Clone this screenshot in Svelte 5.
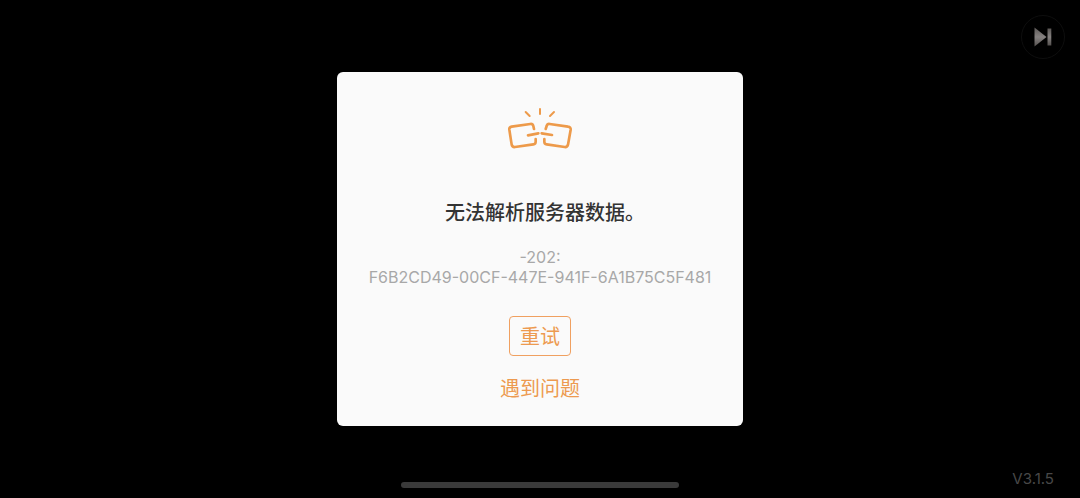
<script>
  let version = 'V3.1.5';
  let message = '无法解析服务器数据。';
  let errorCode = -202;
  let requestId = 'F6B2CD49-00CF-447E-941F-6A1B75C5F481';
  let open = true;
  let retrying = false;

  function retry() {
    retrying = true;
    setTimeout(() => {
      retrying = false;
    }, 1000);
  }

  function skip() {
    open = false;
  }
</script>

<div class="screen">
  <header>
    <button class="skip" aria-label="跳过" on:click={skip}>
      <svg width="20" height="22" viewBox="0 0 20 22" aria-hidden="true">
        <defs>
          <linearGradient id="metal" x1="0" y1="0" x2="0" y2="1">
            <stop offset="0" stop-color="#5c5856" />
            <stop offset="0.5" stop-color="#858180" />
            <stop offset="1" stop-color="#55514f" />
          </linearGradient>
        </defs>
        <path d="M1.5 1.5L13.5 11L1.5 20.5Z" fill="url(#metal)" />
        <path d="M14.5 2.5H18.3V19.5H14.5Z" fill="url(#metal)" />
      </svg>
    </button>
  </header>

  <main>
    {#if open}
      <div class="dialog" role="alertdialog" aria-labelledby="title" aria-describedby="detail">
        <svg class="broken-link" width="66" height="44" viewBox="36 33 198 132" aria-hidden="true">
          <!-- sparks -->
          <g stroke-width="6">
            <path d="M92 51L104 63" />
            <path d="M135 42V57" />
            <path d="M177 51L165 63" />
          </g>
          <!-- left and right link -->
          <g stroke-width="8">
            <path d="M117 102L115 93Q113 86 106 87L50 95Q42 96 43 104L50 149Q52 157 60 156L115 148Q122 147 122 140V132" />
            <path d="M99 121L130 115" />
            <path d="M152 102L155 93Q157 86 164 87L219 95Q228 96 227 104L219 149Q217 157 209 156L155 148Q148 147 148 140V132" />
            <path d="M140 115L171 120" />
          </g>
        </svg>
        <h1 id="title">{message}</h1>
        <p id="detail">{errorCode}:<br />{requestId}</p>
        <button class="retry" on:click={retry} disabled={retrying}>重试</button>
        <a href="#help">遇到问题</a>
      </div>
    {/if}
  </main>

  <footer>
    <span class="home-bar"></span>
    <span class="version">{version}</span>
  </footer>
</div>

<style>
  :global(body) {
    margin: 0;
    background: #000;
  }

  .screen {
    box-sizing: border-box;
    min-height: 100vh;
    display: grid;
    grid-template-rows: 1fr auto 1fr;
    background: #000;
    font-family: Inter, "Noto Sans CJK SC", sans-serif;
  }

  header {
    display: flex;
    justify-content: flex-end;
    align-items: flex-start;
    padding: 15px 15px 0;
  }

  .skip {
    display: flex;
    align-items: center;
    justify-content: center;
    width: 44px;
    height: 44px;
    padding: 0;
    border: 1px solid #0e0e0e;
    border-radius: 50%;
    background: #000;
    cursor: pointer;
  }

  main {
    display: flex;
    justify-content: center;
  }

  .dialog {
    box-sizing: border-box;
    width: 406px;
    max-width: 100%;
    padding: 34px 20px 22px;
    display: flex;
    flex-direction: column;
    align-items: center;
    border-radius: 6px;
    background: #fafafa;
    text-align: center;
  }

  .broken-link {
    fill: none;
    stroke: #ed9a4a;
    stroke-linecap: round;
    stroke-linejoin: round;
  }

  h1 {
    margin: 48px 0 0;
    color: #333;
    font-size: 20px;
    font-weight: 500;
    font-feature-settings: "halt";
    line-height: 30px;
  }

  p {
    margin: 19px 0 0;
    color: #a8a8a8;
    font-size: 16px;
    line-height: 20px;
  }

  .retry {
    height: 40px;
    margin-top: 29px;
    padding: 2px 10px 0;
    border: 1px solid #f0a060;
    border-radius: 4px;
    background: transparent;
    color: #ed9a50;
    font-family: inherit;
    font-size: 20px;
    line-height: 30px;
    cursor: pointer;
  }

  a {
    margin-top: 18px;
    color: #ed9a50;
    font-size: 20px;
    line-height: 30px;
    text-decoration: none;
  }

  footer {
    display: grid;
    grid-template-columns: 1fr 278px 1fr;
    align-items: end;
    padding: 0 26px 10px;
  }

  .home-bar {
    grid-column: 2;
    height: 6px;
    border-radius: 3px;
    background: #3a3a3a;
  }

  .version {
    justify-self: end;
    color: #484848;
    font-size: 15px;
    line-height: 18px;
  }
</style>
